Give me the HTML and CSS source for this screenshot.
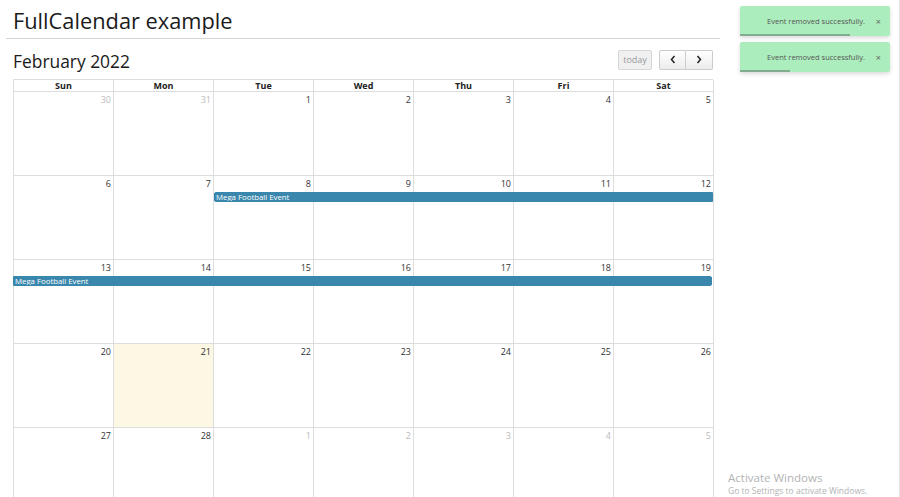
FILE: index.html
```html
<!DOCTYPE html>
<html lang="en">
<head>
    <meta charset="UTF-8">
    <meta name="viewport" content="width=device-width, initial-scale=1.0">
    <title>FullCalendar example</title>
    <link rel="stylesheet" href="styles.css">
</head>
<body>
    <div class="page">
        <div class="main">
            <h1 class="page-title">FullCalendar example</h1>

            <div class="calendar">
                <div class="toolbar">
                    <h2>February 2022</h2>
                    <div class="buttons">
                        <button class="btn btn-today" disabled>today</button>
                        <div class="btn-group">
                            <button class="btn">
                                <svg width="8" height="9" viewBox="0 0 8 9"><path d="M5.5 1 L2.5 4.5 L5.5 8" fill="none" stroke="#222" stroke-width="1.5"/></svg>
                            </button>
                            <button class="btn">
                                <svg width="8" height="9" viewBox="0 0 8 9"><path d="M2.5 1 L5.5 4.5 L2.5 8" fill="none" stroke="#222" stroke-width="1.5"/></svg>
                            </button>
                        </div>
                    </div>
                </div>

                <div class="day-names">
                    <div>Sun</div><div>Mon</div><div>Tue</div><div>Wed</div><div>Thu</div><div>Fri</div><div>Sat</div>
                </div>

                <div class="week">
                    <div class="cell"></div><div class="cell"></div><div class="cell"></div><div class="cell"></div><div class="cell"></div><div class="cell"></div><div class="cell"></div>
                    <div class="num other c1">30</div><div class="num other c2">31</div><div class="num c3">1</div><div class="num c4">2</div><div class="num c5">3</div><div class="num c6">4</div><div class="num c7">5</div>
                </div>

                <div class="week">
                    <div class="cell"></div><div class="cell"></div><div class="cell"></div><div class="cell"></div><div class="cell"></div><div class="cell"></div><div class="cell"></div>
                    <div class="num c1">6</div><div class="num c2">7</div><div class="num c3">8</div><div class="num c4">9</div><div class="num c5">10</div><div class="num c6">11</div><div class="num c7">12</div>
                    <div class="event event-start">Mega Football Event</div>
                </div>

                <div class="week">
                    <div class="cell"></div><div class="cell"></div><div class="cell"></div><div class="cell"></div><div class="cell"></div><div class="cell"></div><div class="cell"></div>
                    <div class="num c1">13</div><div class="num c2">14</div><div class="num c3">15</div><div class="num c4">16</div><div class="num c5">17</div><div class="num c6">18</div><div class="num c7">19</div>
                    <div class="event event-end">Mega Football Event</div>
                </div>

                <div class="week">
                    <div class="cell"></div><div class="cell today"></div><div class="cell"></div><div class="cell"></div><div class="cell"></div><div class="cell"></div><div class="cell"></div>
                    <div class="num c1">20</div><div class="num c2">21</div><div class="num c3">22</div><div class="num c4">23</div><div class="num c5">24</div><div class="num c6">25</div><div class="num c7">26</div>
                </div>

                <div class="week">
                    <div class="cell"></div><div class="cell"></div><div class="cell"></div><div class="cell"></div><div class="cell"></div><div class="cell"></div><div class="cell"></div>
                    <div class="num c1">27</div><div class="num c2">28</div><div class="num other c3">1</div><div class="num other c4">2</div><div class="num other c5">3</div><div class="num other c6">4</div><div class="num other c7">5</div>
                </div>
            </div>
        </div>

        <div class="side">
            <div class="toast">
                <span class="toast-text">Event removed successfully.</span>
                <span class="toast-close">&times;</span>
                <div class="toast-progress" style="width: 73%"></div>
            </div>
            <div class="toast">
                <span class="toast-text">Event removed successfully.</span>
                <span class="toast-close">&times;</span>
                <div class="toast-progress" style="width: 33%"></div>
            </div>

            <div class="watermark">
                <div class="wm-title">Activate Windows</div>
                <div class="wm-sub">Go to Settings to activate Windows.</div>
            </div>
        </div>
    </div>
</body>
</html>
```

FILE: styles.css
```css
body {
    margin: 0;
    font-family: "Open Sans", "Noto Sans", sans-serif;
    color: #222;
    background: #fff;
    overflow: hidden;
}
.page {
    display: flex;
    height: 497px;
}
.main {
    width: 714px;
    margin-left: 6px;
}
.page-title {
    margin: 0;
    padding: 6px 0 0 7px;
    height: 32px;
    font-size: 21.8px;
    font-weight: 400;
    line-height: 30px;
    border-bottom: 1px solid #d6d6d6;
    color: #1a1a1a;
}
.calendar {
    margin-left: 7px;
    width: 700px;
}
.toolbar {
    display: flex;
    justify-content: space-between;
    align-items: center;
    height: 40px;
}
.toolbar h2 {
    margin: 0;
    font-size: 17.4px;
    font-weight: 400;
    color: #1a1a1a;
    padding-top: 3px;
}
.buttons {
    display: flex;
    gap: 7px;
    align-items: center;
    padding-top: 1px;
}
.btn {
    height: 20px;
    padding: 0 8px;
    border: 1px solid #ccc;
    background: linear-gradient(#fff, #ececec);
    font-family: inherit;
    font-size: 9px;
    display: flex;
    align-items: center;
    justify-content: center;
}
.btn-today {
    width: 34px;
    padding: 0;
    color: #999;
    background: #f0f0f0;
    border-color: #d6d6d6;
    border-radius: 2px;
}
.btn-group {
    display: flex;
}
.btn-group .btn {
    width: 27px;
    padding: 0;
}
.btn-group .btn:first-child {
    border-radius: 2px 0 0 2px;
}
.btn-group .btn:last-child {
    border-left: none;
    border-radius: 0 2px 2px 0;
}
.day-names {
    display: grid;
    grid-template-columns: repeat(7, 100px);
    border-top: 1px solid #ddd;
    border-left: 1px solid #ddd;
}
.day-names div {
    border-right: 1px solid #ddd;
    border-bottom: 1px solid #ddd;
    font-size: 9px;
    font-weight: 700;
    text-align: center;
    height: 11px;
    line-height: 11px;
}
.week {
    display: grid;
    grid-template-columns: repeat(7, 100px);
    grid-template-rows: 16px 11px 1fr;
    height: 84px;
    border-left: 1px solid #ddd;
}
.cell {
    grid-row: 1 / -1;
    border-right: 1px solid #ddd;
    border-bottom: 1px solid #ddd;
}
.cell:nth-child(1) { grid-column: 1; }
.cell:nth-child(2) { grid-column: 2; }
.cell:nth-child(3) { grid-column: 3; }
.cell:nth-child(4) { grid-column: 4; }
.cell:nth-child(5) { grid-column: 5; }
.cell:nth-child(6) { grid-column: 6; }
.cell:nth-child(7) { grid-column: 7; }
.cell.today {
    background: #fcf8e3;
}
.num {
    grid-row: 1;
    text-align: right;
    padding: 2px 3px 0 0;
    font-size: 9px;
    line-height: 12px;
    color: #333;
}
.num.other {
    color: #bbb;
}
.c1 { grid-column: 1; }
.c2 { grid-column: 2; }
.c3 { grid-column: 3; }
.c4 { grid-column: 4; }
.c5 { grid-column: 5; }
.c6 { grid-column: 6; }
.c7 { grid-column: 7; }
.event {
    grid-row: 2;
    align-self: start;
    margin-top: 0;
    height: 8px;
    line-height: 8px;
    background: #3a87ad;
    border: 1px solid #3a87ad;
    color: #fff;
    font-size: 7.8px;
    padding-left: 1px;
    white-space: nowrap;
    overflow: hidden;
}
.event-start {
    grid-column: 3 / 8;
    margin-left: 0;
    margin-right: 1px;
    border-radius: 2px 0 0 2px;
}
.event-end {
    grid-column: 1 / 8;
    margin-left: -1px;
    margin-right: 2px;
    border-radius: 0 2px 2px 0;
}
.side {
    flex: 1;
    position: relative;
    padding: 6px 0 0 20px;
    border-right: 1px solid #e6e6e6;
}
.toast {
    position: relative;
    width: 150px;
    height: 30px;
    margin-bottom: 6px;
    background: #abedbd;
    border-radius: 2px;
    box-shadow: 0 2px 4px rgba(0, 0, 0, 0.15);
    display: flex;
    align-items: center;
    font-size: 7.5px;
    color: #555;
}
.toast-text {
    margin-left: 27px;
    flex: 1;
}
.toast-close {
    margin-right: 9px;
    font-size: 9px;
    color: #666;
}
.toast-progress {
    position: absolute;
    left: 0;
    bottom: 0;
    height: 2px;
    background: #82ad90;
}
.watermark {
    position: absolute;
    left: 8px;
    bottom: 0;
    color: #b3b3b3;
}
.wm-title {
    font-size: 11.5px;
    line-height: 14px;
}
.wm-sub {
    font-size: 8.5px;
    line-height: 12px;
}
```
